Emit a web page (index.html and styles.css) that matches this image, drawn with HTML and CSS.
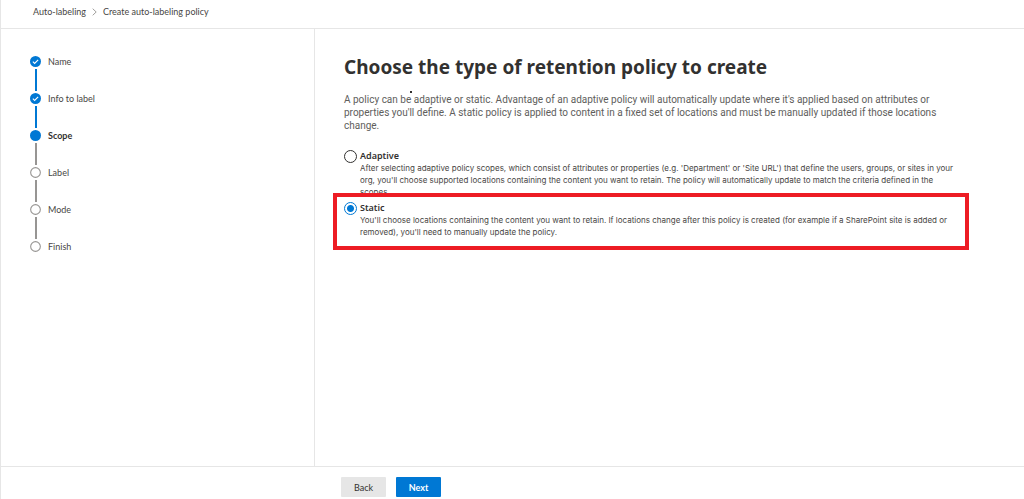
FILE: index.html
```html
<!DOCTYPE html>
<html lang="en">
<head>
<meta charset="utf-8">
<meta name="viewport" content="width=device-width, initial-scale=1">
<title>Create auto-labeling policy</title>
<link rel="stylesheet" href="styles.css">
</head>
<body>
<div class="wizard">
  <nav class="breadcrumb" aria-label="Breadcrumb">
    <a href="#">Auto-labeling</a>
    <svg class="chevron" viewBox="0 0 5 8" aria-hidden="true"><path d="M.7.7 4.2 4 .7 7.3"/></svg>
    <span>Create auto-labeling policy</span>
  </nav>
  <div class="body">
    <aside class="sidebar">
      <ol class="steps">
        <li class="step done"><svg class="dot" viewBox="0 0 10 10" aria-hidden="true"><circle cx="5" cy="5" r="5"/><path d="M2.6 5.2 4.2 6.7 7.4 3.5"/></svg><span>Name</span></li>
        <li class="step done"><svg class="dot" viewBox="0 0 10 10" aria-hidden="true"><circle cx="5" cy="5" r="5"/><path d="M2.6 5.2 4.2 6.7 7.4 3.5"/></svg><span>Info to label</span></li>
        <li class="step current" aria-current="step"><svg class="dot" viewBox="0 0 10 10" aria-hidden="true"><circle cx="5" cy="5" r="5"/></svg><span>Scope</span></li>
        <li class="step"><svg class="dot" viewBox="0 0 10 10" aria-hidden="true"><circle cx="5" cy="5" r="4.4"/></svg><span>Label</span></li>
        <li class="step"><svg class="dot" viewBox="0 0 10 10" aria-hidden="true"><circle cx="5" cy="5" r="4.4"/></svg><span>Mode</span></li>
        <li class="step"><svg class="dot" viewBox="0 0 10 10" aria-hidden="true"><circle cx="5" cy="5" r="4.4"/></svg><span>Finish</span></li>
      </ol>
    </aside>
    <main class="content">
      <h1>Choose the type of retention policy to create</h1>
      <p class="intro">A policy can be adaptive or static. Advantage of an adaptive policy will automatically update where it's applied based on attributes or<br>properties you'll define. A static policy is applied to content in a fixed set of locations and must be manually updated if those locations<br>change.</p>
      <form class="options">
        <div class="option">
          <input type="radio" name="type" id="adaptive" aria-describedby="adaptive-text">
          <label for="adaptive">Adaptive</label>
          <p id="adaptive-text">After selecting adaptive policy scopes, which consist of attributes or properties (e.g. 'Department' or 'Site URL') that define the users, groups, or sites in your<br>org, you'll choose supported locations containing the content you want to retain. The policy will automatically update to match the criteria defined in the<br>scopes.</p>
        </div>
        <div class="option marked">
          <input type="radio" name="type" id="static" aria-describedby="static-text" checked>
          <label for="static">Static</label>
          <p id="static-text">You'll choose locations containing the content you want to retain. If locations change after this policy is created (for example if a SharePoint site is added or<br>removed), you'll need to manually update the policy.</p>
        </div>
      </form>
    </main>
  </div>
  <footer class="footer">
    <button type="button" class="button">Back</button>
    <button type="button" class="button primary">Next</button>
  </footer>
</div>
</body>
</html>
```
FILE: styles.css
```css
* { box-sizing: border-box; }
body {
  margin: 0;
  background: #fff;
  color: #484644;
  font-family: Lato, "Open Sans", sans-serif;
  font-size: 9px;
  line-height: 13px;
}
p, h1, ol { margin: 0; padding: 0; }
.wizard {
  min-height: 100vh;
  display: flex;
  flex-direction: column;
  border-left: 1px solid #e6e6e6;
}
.breadcrumb {
  display: flex;
  align-items: center;
  gap: 6px;
  padding: 5px 32px 10px;
  border-bottom: 1px solid #e6e6e6;
}
.breadcrumb a { color: inherit; text-decoration: none; }
.chevron { width: 5px; height: 8px; fill: none; stroke: #a19f9d; }
.body { flex: 1; display: flex; }
.sidebar {
  flex: 0 0 314px;
  padding: 26px 29px;
  border-right: 1px solid #e6e6e6;
}
.steps { list-style: none; }
.step {
  position: relative;
  display: flex;
  align-items: center;
  gap: 7px;
  height: 13px;
  margin-bottom: 24px;
}
.step:not(:last-child)::after {
  content: "";
  position: absolute;
  left: 5px;
  top: 14px;
  width: 2px;
  height: 22px;
  background: #979593;
}
.step.done::after { background: #0078d4; }
.dot { width: 11px; height: 11px; fill: #fff; stroke: #979593; }
.done .dot, .current .dot { fill: #0078d4; stroke: none; }
.done .dot path { fill: none; stroke: #fff; }
.current { color: #323130; font-weight: 700; }
.content { flex: 1; min-width: 0; padding: 26px 29px; }
h1 {
  position: relative;
  color: #323130;
  font-family: "Noto Sans", "Open Sans", sans-serif;
  font-size: 19px;
  line-height: 24px;
}
h1::after {
  content: "";
  position: absolute;
  left: 66px;
  top: 36px;
  width: 2px;
  height: 2px;
  background: #323130;
}
.intro {
  margin-top: 14px;
  color: #605e5c;
  font-family: Roboto, sans-serif;
  font-size: 10px;
}
.options { margin-top: 18px; line-height: 12px; }
.option {
  position: relative;
  display: grid;
  grid-template-columns: 13px 1fr;
  column-gap: 3px;
  margin-bottom: 4px;
  white-space: nowrap;
}
.option label {
  color: #323130;
  font-family: "Noto Sans", "Open Sans", sans-serif;
  font-weight: 600;
}
.option p { grid-column: 2; font-family: Inter, sans-serif; font-size: 8px; }
.option input {
  appearance: none;
  width: 13px;
  height: 13px;
  margin: 0 0 -1px;
  border: 1px solid #323130;
  border-radius: 50%;
  background: #fff;
}
.option input:checked {
  border-color: #0078d4;
  background: radial-gradient(circle, #0078d4 3px, #fff 4px);
}
.marked::after {
  content: "";
  position: absolute;
  inset: -9px 26px -12px -11px;
  border: 4px solid #ed1c24;
  pointer-events: none;
}
.footer {
  display: flex;
  gap: 10px;
  padding: 10px 340px 2px;
  border-top: 1px solid #e6e6e6;
}
.button {
  width: 45px;
  height: 20px;
  padding: 0;
  border: 0;
  border-radius: 1px;
  background: #e6e6e6;
  color: #323130;
  font: inherit;
}
.primary { background: #0078d4; color: #fff; font-weight: 700; }
```
